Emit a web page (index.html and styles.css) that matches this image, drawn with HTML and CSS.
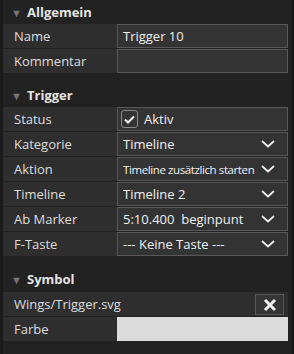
FILE: index.html
```html
<!DOCTYPE html>
<html lang="de">
<head>
  <meta charset="UTF-8" />
  <title>Trigger</title>
  <link rel="stylesheet" href="styles.css">
</head>
<body>
  <div class="panel">

    <!-- Allgemein -->
    <div class="section">
      <div class="section-head"><span class="caret">▼</span>Allgemein</div>
      <div class="row">
        <div class="label">Name</div>
        <div class="field">Trigger 10</div>
      </div>
      <div class="row">
        <div class="label">Kommentar</div>
        <div class="field"></div>
      </div>
    </div>

    <!-- Trigger -->
    <div class="section">
      <div class="section-head"><span class="caret">▼</span>Trigger</div>
      <div class="row">
        <div class="label">Status</div>
        <div class="field field-check">
          <span class="checkbox">
            <svg width="11" height="9" viewBox="0 0 11 9"><path d="M1 4.5 L4 7.5 L10 1.5" fill="none" stroke="#f0f0f0" stroke-width="2"/></svg>
          </span>
          Aktiv
        </div>
      </div>
      <div class="row">
        <div class="label">Kategorie</div>
        <div class="field select">
          <span class="value">Timeline</span>
          <svg class="chev" width="14" height="8" viewBox="0 0 14 8"><path d="M1 1 L7 6.5 L13 1" fill="none" stroke="#f0f0f0" stroke-width="1.7"/></svg>
        </div>
      </div>
      <div class="row">
        <div class="label">Aktion</div>
        <div class="field select">
          <span class="value narrow">Timeline zusätzlich starten</span>
          <svg class="chev" width="14" height="8" viewBox="0 0 14 8"><path d="M1 1 L7 6.5 L13 1" fill="none" stroke="#f0f0f0" stroke-width="1.7"/></svg>
        </div>
      </div>
      <div class="row">
        <div class="label">Timeline</div>
        <div class="field select">
          <span class="value">Timeline 2</span>
          <svg class="chev" width="14" height="8" viewBox="0 0 14 8"><path d="M1 1 L7 6.5 L13 1" fill="none" stroke="#f0f0f0" stroke-width="1.7"/></svg>
        </div>
      </div>
      <div class="row">
        <div class="label">Ab Marker</div>
        <div class="field select">
          <span class="value keep">5:10.400  beginpunt</span>
          <svg class="chev" width="14" height="8" viewBox="0 0 14 8"><path d="M1 1 L7 6.5 L13 1" fill="none" stroke="#f0f0f0" stroke-width="1.7"/></svg>
        </div>
      </div>
      <div class="row">
        <div class="label">F-Taste</div>
        <div class="field select">
          <span class="value">--- Keine Taste ---</span>
          <svg class="chev" width="14" height="8" viewBox="0 0 14 8"><path d="M1 1 L7 6.5 L13 1" fill="none" stroke="#f0f0f0" stroke-width="1.7"/></svg>
        </div>
      </div>
    </div>

    <!-- Symbol -->
    <div class="section section-last">
      <div class="section-head"><span class="caret">▼</span>Symbol</div>
      <div class="row">
        <div class="label wide">Wings/Trigger.svg</div>
        <button class="clear">
          <svg width="14" height="14" viewBox="0 0 14 14"><path d="M2 2 L12 12 M12 2 L2 12" stroke="#f2f2f2" stroke-width="3"/></svg>
        </button>
      </div>
      <div class="row">
        <div class="label">Farbe</div>
        <div class="swatch"></div>
      </div>
    </div>

  </div>
</body>
</html>
```

FILE: styles.css
```css
* {
  margin: 0;
  padding: 0;
  box-sizing: border-box;
}

body {
  background: #222222;
  font-family: 'Open Sans', sans-serif;
  font-size: 13px;
  color: #dedede;
  width: 294px;
  height: 354px;
  overflow: hidden;
  border-left: 3px solid #1a1a1a;
  border-right: 2px solid #161616;
}

.panel {
  width: 285px;
}

.section + .section {
  margin-top: 10px;
}

.section-last .section-head {
  height: 26px;
}

.section-head {
  height: 24px;
  display: flex;
  align-items: center;
  font-weight: bold;
  color: #e4e4e4;
  padding-left: 8px;
}

.caret {
  font-size: 11px;
  color: #767676;
  width: 16px;
}

.row {
  height: 24px;
  display: flex;
  align-items: stretch;
  background: #2e2e2e;
  margin-bottom: 1px;
}

.label {
  width: 114px;
  padding-left: 11px;
  display: flex;
  align-items: center;
}

.label.wide {
  flex: 1;
}

.field {
  flex: 1;
  background: #333333;
  border: 1px solid #575757;
  display: flex;
  align-items: center;
  padding-left: 5px;
  color: #f0f0f0;
}

.field-check {
  padding-left: 3px;
  gap: 6px;
}

.checkbox {
  width: 17px;
  height: 18px;
  border: 1px solid #8a8a8a;
  border-radius: 3px;
  display: flex;
  align-items: center;
  justify-content: center;
}

.select .value {
  flex: 1;
  white-space: nowrap;
  overflow: hidden;
}

.select .value.narrow {
  font-size: 11.5px;
  letter-spacing: -0.4px;
}

.select .value.keep {
  white-space: pre;
}

.chev {
  margin-right: 12px;
}

.clear {
  width: 29px;
  height: 21px;
  margin: 2px 4px 1px 0;
  background: #353535;
  border: 1px solid #575757;
  display: flex;
  align-items: center;
  justify-content: center;
}

.swatch {
  flex: 1;
  background: #dcdcdc;
}
```
